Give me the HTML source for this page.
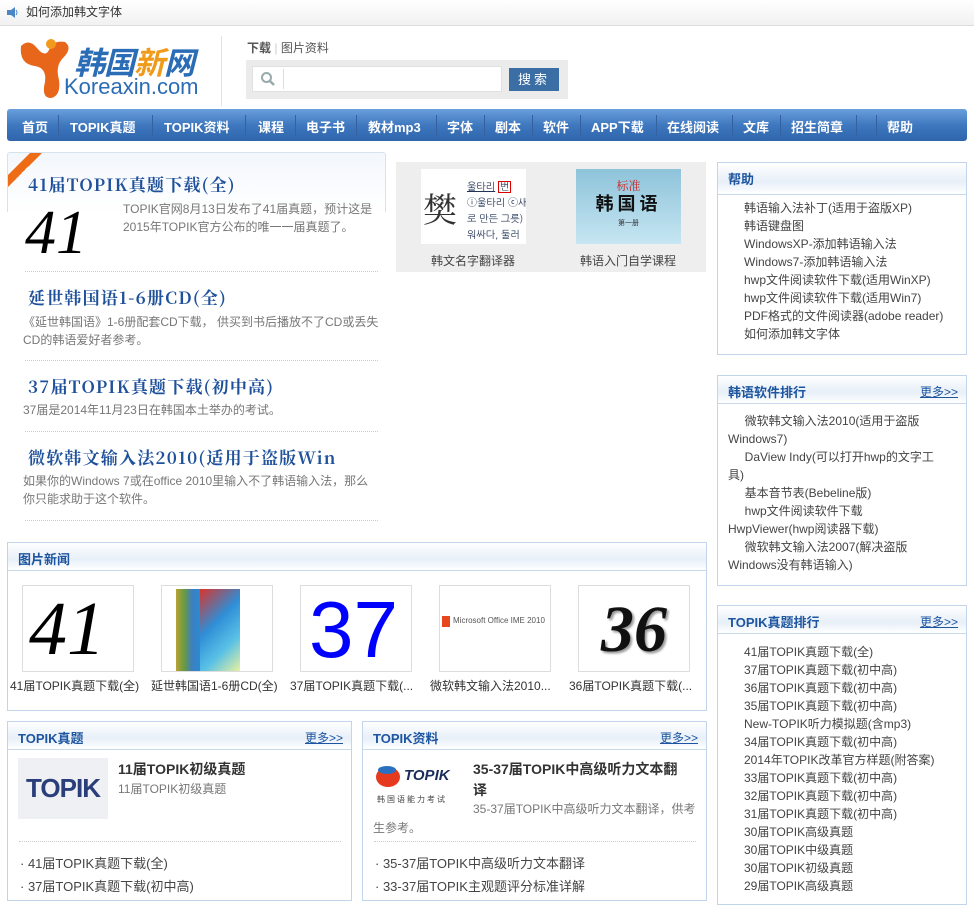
<!DOCTYPE html>
<html><head><meta charset="utf-8">
<style>
*{margin:0;padding:0;box-sizing:border-box}
body{width:974px;height:885px;overflow:hidden;background:#fff;font-family:"Liberation Sans","Noto Sans CJK SC",sans-serif;font-size:12px;color:#333;position:relative}
.a{position:absolute;white-space:nowrap}
.top{left:0;top:0;width:974px;height:26px;background:linear-gradient(#fff,#f1f1f1);border-bottom:1px solid #ddd}
.nav{left:7px;top:109px;width:960px;height:32px;border-radius:3px;background:linear-gradient(#6a9fdc,#3f78bf 50%,#2f65ac);}
.nav span{position:absolute;top:8px;color:#fff;font-weight:bold;font-size:13px}
.nav i{position:absolute;top:6px;width:1px;height:22px;background:#7ea6d6;border-right:1px solid #3462a0}
.box{position:absolute;border:1px solid #c3d5ea;background:#fff}
.hd{position:absolute;left:0;top:0;right:0;height:28px;background:linear-gradient(#fff,#e7eff8 60%,#fff);border-bottom:1px solid #c9d9ec}
.hd b{position:absolute;left:10px;top:6px;color:#1d55a0;font-size:13px}
.hd u{position:absolute;right:8px;top:7px;color:#1d55a0;font-size:12px}
.t{color:#1f519b;font-weight:bold;font-size:17px;letter-spacing:1.2px;font-family:"Noto Serif CJK SC",serif}
.d{color:#777;font-size:12px}
.dot{position:absolute;border-top:1px dotted #ccc;height:0}
.li{color:#444;font-size:12px;line-height:18px}
.img{position:absolute;border:1px solid #ddd;background:#fff;overflow:hidden}
</style></head><body>
<div class="a top"></div>
<svg class="a" style="left:7px;top:6px" width="12" height="13"><rect x="0" y="4" width="4" height="5" fill="#4a86c8"/><path d="M4 4 L8 1 V12 L4 9Z" fill="#4a86c8"/><path d="M9 4 Q11 6.5 9 9" stroke="#4a86c8" fill="none"/></svg>
<div class="a" style="left:26px;top:3px;font-size:12px;color:#333">如何添加韩文字体</div>

<svg class="a" style="left:15px;top:36px" width="70" height="68"><path d="M6 10 Q14 2 22 12 Q30 22 34 14 Q38 4 50 6 Q58 12 48 22 Q40 30 44 44 Q46 60 36 62 Q26 62 30 46 Q32 32 20 30 Q4 28 6 10Z" fill="#e8661a"/><circle cx="36" cy="8" r="5" fill="#f29a1c"/></svg>
<div class="a" style="left:74px;top:38px;font-size:31px;font-weight:bold;font-style:italic;color:#2b6cb6;letter-spacing:-1px">韩国<span style="color:#f09a1a">新</span>网</div>
<div class="a" style="left:64px;top:74px;font-size:22px;color:#2b6cb6">Koreaxin.com</div>
<div class="a" style="left:221px;top:36px;width:1px;height:70px;background:#e3e3e3"></div>
<div class="a" style="left:247px;top:39px;font-size:12px;color:#555"><b>下载</b> <span style="color:#ccc">|</span> 图片资料</div>
<div class="a" style="left:246px;top:60px;width:322px;height:39px;background:#ebebeb"></div>
<div class="a" style="left:252px;top:66px;width:250px;height:26px;background:#fff;border:1px solid #e0e0e0"></div>
<svg class="a" style="left:260px;top:71px" width="16" height="16"><circle cx="6.5" cy="6.5" r="4.5" stroke="#9aa" stroke-width="2" fill="none"/><path d="M10 10 L14 14" stroke="#9aa" stroke-width="2.5"/></svg>
<div class="a" style="left:283px;top:69px;width:1px;height:20px;background:#ddd"></div>
<div class="a" style="left:509px;top:68px;width:50px;height:23px;background:#3b6ea5;color:#fff;font-size:13px;text-align:center;line-height:23px;letter-spacing:3px">搜索</div>

<div class="a nav">
<span style="left:15px">首页</span><i style="left:51px"></i>
<span style="left:63px">TOPIK真题</span><i style="left:145px"></i>
<span style="left:157px">TOPIK资料</span><i style="left:238px"></i>
<span style="left:251px">课程</span><i style="left:288px"></i>
<span style="left:299px">电子书</span><i style="left:349px"></i>
<span style="left:361px">教材mp3</span><i style="left:429px"></i>
<span style="left:440px">字体</span><i style="left:477px"></i>
<span style="left:488px">剧本</span><i style="left:525px"></i>
<span style="left:536px">软件</span><i style="left:573px"></i>
<span style="left:584px">APP下载</span><i style="left:649px"></i>
<span style="left:660px">在线阅读</span><i style="left:725px"></i>
<span style="left:736px">文库</span><i style="left:773px"></i>
<span style="left:784px">招生简章</span><i style="left:849px"></i><i style="left:869px"></i>
<span style="left:880px">帮助</span>
</div>

<div class="a" style="left:7px;top:152px;width:379px;height:60px;border:1px solid #d5e2f0;border-bottom:none;border-radius:3px 3px 0 0;background:linear-gradient(#f3f7fc,#fff)"></div>
<svg class="a" style="left:8px;top:153px" width="36" height="36"><path d="M0 22 L22 0 H34 L0 34Z" fill="#ef6c17"/><text x="4" y="26" transform="rotate(-45 12 18)" font-size="8" fill="#fff" font-family="Liberation Sans">HOT</text></svg>
<div class="a t" style="left:28px;top:171px">41届TOPIK真题下载(全)</div>
<div class="a" style="left:25px;top:200px;width:84px;height:64px;font-family:'Liberation Serif',serif;font-style:italic;font-size:62px;line-height:66px;color:#000">41</div>
<div class="a d" style="left:123px;top:200px;line-height:18px">TOPIK官网8月13日发布了41届真题，预计这是<br>2015年TOPIK官方公布的唯一一届真题了。</div>
<div class="dot" style="left:25px;top:271px;width:353px"></div>
<div class="a t" style="left:28px;top:284px">延世韩国语1-6册CD(全)</div>
<div class="a d" style="left:23px;top:313px;line-height:18px">《延世韩国语》1-6册配套CD下载， 供买到书后播放不了CD或丢失<br>CD的韩语爱好者参考。</div>
<div class="dot" style="left:25px;top:360px;width:353px"></div>
<div class="a t" style="left:28px;top:373px">37届TOPIK真题下载(初中高)</div>
<div class="a d" style="left:23px;top:401px">37届是2014年11月23日在韩国本土举办的考试。</div>
<div class="dot" style="left:25px;top:431px;width:353px"></div>
<div class="a t" style="left:28px;top:444px">微软韩文输入法2010(适用于盗版Win</div>
<div class="a d" style="left:23px;top:472px;line-height:18px">如果你的Windows 7或在office 2010里输入不了韩语输入法，那么<br>你只能求助于这个软件。</div>
<div class="dot" style="left:25px;top:520px;width:353px"></div>

<div class="a" style="left:396px;top:162px;width:310px;height:110px;background:#eeeeee"></div>
<div class="a" style="left:421px;top:169px;width:105px;height:75px;background:#fff;overflow:hidden">
<div class="a" style="left:2px;top:14px;font-size:34px;font-family:'Noto Serif CJK SC',serif">樊</div>
<div class="a" style="left:46px;top:10px;font-size:10px;color:#235;line-height:16px;font-family:'NanumGothic',sans-serif"><u>울타리</u> <span style="border:1px solid #d00;padding:0 1px">번</span><br>ⓘ울타리 ⓒ새<br>로 만든 그릇)<br>워싸다, 둘러</div></div>
<div class="a" style="left:576px;top:169px;width:105px;height:75px;background:linear-gradient(#8ec3da,#c6e6f2);text-align:center">
<div style="color:#c22;font-size:12px;margin-top:8px;font-family:'Noto Serif CJK SC',serif">标准</div>
<div style="font-weight:bold;font-size:18px;color:#111;letter-spacing:4px;line-height:20px">韩国语</div>
<div style="font-size:7px;margin-top:4px">第一册</div></div>
<div class="a" style="left:431px;top:252px;font-size:12px;color:#444">韩文名字翻译器</div>
<div class="a" style="left:580px;top:252px;font-size:12px;color:#444">韩语入门自学课程</div>

<div class="box" style="left:717px;top:162px;width:250px;height:193px"><div class="hd" style="height:32px"><b style="top:6px">帮助</b></div>
<div class="a li" style="left:26px;top:36px">韩语输入法补丁(适用于盗版XP)<br>韩语键盘图<br>WindowsXP-添加韩语输入法<br>Windows7-添加韩语输入法<br>hwp文件阅读软件下载(适用WinXP)<br>hwp文件阅读软件下载(适用Win7)<br>PDF格式的文件阅读器(adobe reader)<br>如何添加韩文字体</div></div>

<div class="box" style="left:717px;top:375px;width:250px;height:211px"><div class="hd"><b>韩语软件排行</b><u>更多&gt;&gt;</u></div>
<div class="a li" style="left:10px;top:36px;white-space:normal;width:214px">&nbsp;&nbsp;&nbsp;&nbsp;&nbsp;微软韩文输入法2010(适用于盗版 Windows7)<br>&nbsp;&nbsp;&nbsp;&nbsp;&nbsp;DaView Indy(可以打开hwp的文字工具)<br>&nbsp;&nbsp;&nbsp;&nbsp;&nbsp;基本音节表(Bebeline版)<br>&nbsp;&nbsp;&nbsp;&nbsp;&nbsp;hwp文件阅读软件下载HwpViewer(hwp阅读器下载)<br>&nbsp;&nbsp;&nbsp;&nbsp;&nbsp;微软韩文输入法2007(解决盗版 Windows没有韩语输入)</div></div>

<div class="box" style="left:717px;top:605px;width:250px;height:300px"><div class="hd"><b>TOPIK真题排行</b><u>更多&gt;&gt;</u></div>
<div class="a li" style="left:26px;top:37px">41届TOPIK真题下载(全)<br>37届TOPIK真题下载(初中高)<br>36届TOPIK真题下载(初中高)<br>35届TOPIK真题下载(初中高)<br>New-TOPIK听力模拟题(含mp3)<br>34届TOPIK真题下载(初中高)<br>2014年TOPIK改革官方样题(附答案)<br>33届TOPIK真题下载(初中高)<br>32届TOPIK真题下载(初中高)<br>31届TOPIK真题下载(初中高)<br>30届TOPIK高级真题<br>30届TOPIK中级真题<br>30届TOPIK初级真题<br>29届TOPIK高级真题</div></div>

<div class="box" style="left:7px;top:542px;width:700px;height:169px"><div class="hd"><b>图片新闻</b></div></div>
<div class="img" style="left:22px;top:585px;width:112px;height:87px"><div class="a" style="left:6px;top:0;font-family:'Liberation Serif',serif;font-style:italic;font-size:76px;line-height:86px;color:#000">41</div></div>
<div class="img" style="left:161px;top:585px;width:112px;height:87px"><div class="a" style="left:14px;top:3px;width:24px;height:82px;background:linear-gradient(90deg,#b9a23a,#6a9b3e,#3d7fc0,#2a8ad0)"></div><div class="a" style="left:38px;top:3px;width:40px;height:82px;background:linear-gradient(135deg,#d8342c,#2f8ed6 40%,#5ac1e6 70%,#e9f0a0)"></div></div>
<div class="img" style="left:300px;top:585px;width:112px;height:87px"><div class="a" style="left:8px;top:2px;font-family:'Liberation Sans',sans-serif;font-size:80px;line-height:84px;color:#0000ff">37</div></div>
<div class="img" style="left:439px;top:585px;width:112px;height:87px"><div class="a" style="left:2px;top:30px;width:8px;height:11px;background:#e8461c"></div><div class="a" style="left:13px;top:30px;font-size:8px;color:#555">Microsoft Office IME 2010</div></div>
<div class="img" style="left:578px;top:585px;width:112px;height:87px"><div class="a" style="left:22px;top:4px;font-family:'Liberation Serif',serif;font-style:italic;font-weight:bold;font-size:66px;line-height:80px;color:#111;text-shadow:2px 2px 2px #999">36</div></div>
<div class="a" style="left:10px;top:677px;font-size:12px;color:#333">41届TOPIK真题下载(全)</div>
<div class="a" style="left:151px;top:677px;font-size:12px;color:#333">延世韩国语1-6册CD(全)</div>
<div class="a" style="left:290px;top:677px;font-size:12px;color:#333">37届TOPIK真题下载(...</div>
<div class="a" style="left:430px;top:677px;font-size:12px;color:#333">微软韩文输入法2010...</div>
<div class="a" style="left:569px;top:677px;font-size:12px;color:#333">36届TOPIK真题下载(...</div>

<div class="box" style="left:7px;top:721px;width:345px;height:180px"><div class="hd"><b>TOPIK真题</b><u>更多&gt;&gt;</u></div></div>
<div class="a" style="left:18px;top:758px;width:90px;height:61px;background:#eef0f4;color:#2a3f7a;font-weight:bold;font-size:26px;line-height:61px;text-align:center;letter-spacing:-1px">TOPIK</div>
<div class="a" style="left:118px;top:759px;font-size:14px;font-weight:bold;color:#333">11届TOPIK初级真题</div>
<div class="a d" style="left:118px;top:780px">11届TOPIK初级真题</div>
<div class="dot" style="left:19px;top:841px;width:322px"></div>
<div class="a li" style="left:20px;top:852px;font-size:13px;line-height:23px">· 41届TOPIK真题下载(全)<br>· 37届TOPIK真题下载(初中高)</div>

<div class="box" style="left:362px;top:721px;width:345px;height:180px"><div class="hd"><b>TOPIK资料</b><u>更多&gt;&gt;</u></div></div>
<div class="a" style="left:376px;top:767px;width:24px;height:20px;border-radius:50%;background:#e63a1f"></div>
<div class="a" style="left:378px;top:766px;width:18px;height:8px;border-radius:50%;background:#2a6fc0"></div>
<div class="a" style="left:404px;top:767px;font-weight:bold;font-style:italic;font-size:15px;color:#1a2c5a">TOPIK</div>
<div class="a" style="left:377px;top:794px;font-size:8px;color:#444;letter-spacing:2px">韩国语能力考试</div>
<div class="a" style="left:473px;top:759px;font-size:14px;font-weight:bold;color:#333;line-height:21px">35-37届TOPIK中高级听力文本翻<br>译</div>
<div class="a d" style="left:473px;top:800px">35-37届TOPIK中高级听力文本翻译，供考</div>
<div class="a d" style="left:373px;top:819px">生参考。</div>
<div class="dot" style="left:374px;top:841px;width:322px"></div>
<div class="a li" style="left:375px;top:852px;font-size:13px;line-height:23px">· 35-37届TOPIK中高级听力文本翻译<br>· 33-37届TOPIK主观题评分标准详解</div>
</body></html>
